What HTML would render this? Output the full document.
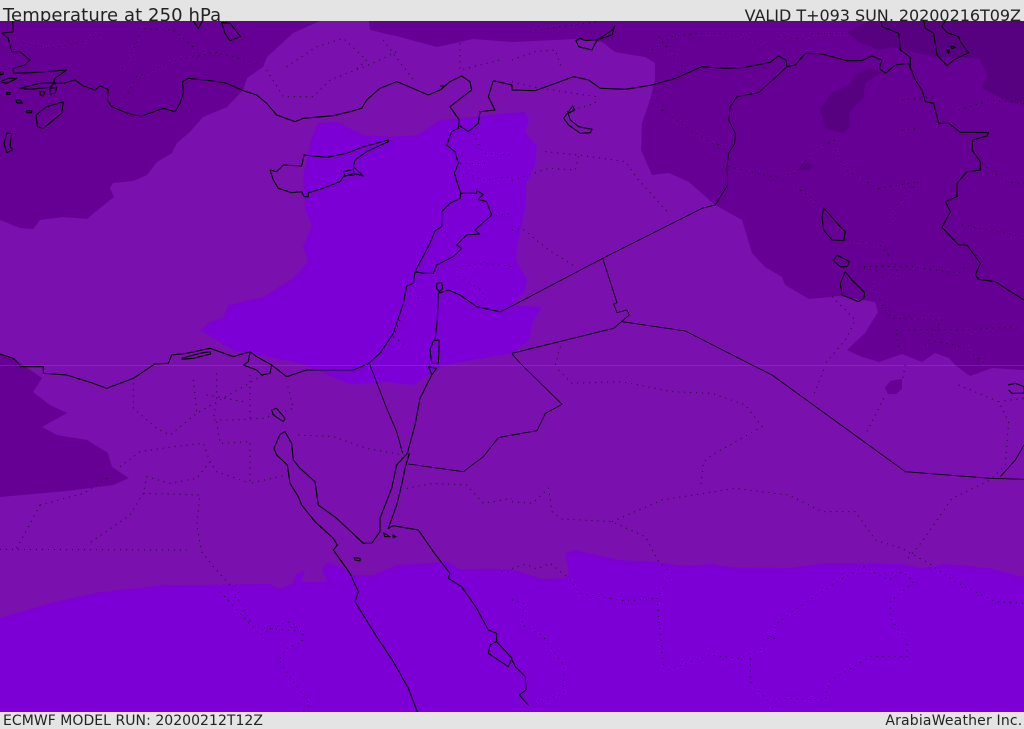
<!DOCTYPE html>
<html><head><meta charset="utf-8"><style>
html,body{margin:0;padding:0;background:#e4e4e4}
body{width:1024px;height:729px;position:relative;overflow:hidden}
.t{position:absolute;font-family:"DejaVu Sans",sans-serif;color:#222;white-space:nowrap;line-height:1}
svg{position:absolute;left:0;top:21px}
.c polyline,.c polygon{fill:none;stroke:#000;stroke-width:3.3;stroke-linejoin:round}
.d polyline{fill:none;stroke:#000;stroke-width:3;stroke-dasharray:3 15;opacity:.75}
</style></head><body>
<div class="t" style="left:3px;top:7px;font-size:18px;letter-spacing:.1px">Temperature at 250 hPa</div>
<div class="t" style="right:3px;top:8px;font-size:16px;letter-spacing:-.03px">VALID T+093 SUN, 20200216T09Z</div>
<svg width="1024" height="691" viewBox="0 21 1024 691">
<rect x="0" y="21" width="1024" height="691" fill="#7a10ad"/>
<g fill="#660094">
<polygon points="0,21 320,21 293,33 267,57 263,67 247,78 243,90 227,107 203,117 190,132 177,143 172,153 157,162 147,175 133,181 113,183 110,188 114,197 100,208 87,219 63,217 40,220 33,229 20,228 0,220"/>
<polygon points="369,21 370,30 400,37 437,47 473,39 512,42 575,39 602,42 615,52 645,57 655,63 655,80 650,100 642,123 641,150 652,175 669,173 689,182 715,205 742,220 752,253 765,267 782,277 785,285 809,299 839,296 875,302 878,312 865,333 847,350 862,357 879,362 902,354 922,362 935,353 949,358 955,365 970,376 992,368 1024,370 1024,21"/>
<polygon points="0,355 13,358 23,365 42,378 33,392 50,405 67,413 42,427 57,435 87,440 108,453 112,467 129,478 113,485 67,491 0,497"/>
<polygon points="885,388 890,381 902,379 902,389 896,394 888,394" fill="#660094"/>
</g>
<g fill="#570080">
<polygon points="847,32 865,23 872,21 1024,21 1024,105 1009,102 982,88 987,75 979,58 935,57 912,52 892,47 879,50 859,42"/>
<polygon points="882,72 865,83 864,97 849,113 850,128 842,133 825,128 820,108 832,93 849,85 855,75 870,68"/>
<polygon points="797,170 805,162 813,165 810,170"/>
</g>
<g fill="#7c00d6">
<polygon points="318,123 337,122 363,135 390,137 417,135 440,120 473,117 512,113 525,112 529,120 525,132 537,147 534,167 526,183 525,207 517,247 516,260 527,280 525,290 512,305 542,307 532,323 529,340 512,353 443,365 413,385 387,382 350,384 333,377 300,363 233,350 200,330 210,322 223,318 228,305 263,297 293,278 308,262 303,247 312,225 305,210 303,177 310,143"/>
<polygon points="0,618 50,603 100,592 167,585 270,584 280,589 293,583 295,575 303,570 305,573 300,582 327,582 322,568 328,562 340,567 353,575 373,575 397,565 447,562 460,569 512,569 542,579 565,578 569,573 565,553 575,550 619,560 659,562 682,566 712,564 729,567 789,568 825,563 902,564 922,568 945,564 989,568 1024,577 1024,712 0,712"/>
</g>
<rect x="0" y="365" width="1024" height="1" fill="#fff" opacity=".1"/>

<g class="d">
<g transform="scale(.33333)">
<polyline points="70,130 150,145 250,125 310,100"/>
<polyline points="415,85 520,90 590,150 680,165 770,190"/>
<polyline points="365,205 400,150 420,100"/>
<polyline points="375,295 410,230 530,180 660,155"/>
<polyline points="800,210 850,290 940,290 990,240 1130,185 1200,150"/>
<polyline points="860,200 950,140 1030,115 1100,180 1060,215"/>
<polyline points="1150,120 1240,240"/>
<polyline points="1380,130 1380,210 1500,180"/>
<polyline points="1420,400 1450,460 1536,465"/>
<polyline points="1380,490 1460,490"/>
<polyline points="1400,520 1450,540 1536,530"/>
<polyline points="1470,650 1536,640"/>
<polyline points="1370,800 1460,790 1536,800"/>
<polyline points="1375,830 1445,870 1460,910"/>
<polyline points="1240,880 1260,900"/>
<polyline points="1200,960 1180,1010 1220,1040"/>
</g>
<g transform="translate(512,0) scale(.33333)">
<polyline points="70,90 150,80 260,65"/>
<polyline points="420,150 480,110 560,100 640,100 780,135"/>
<polyline points="440,110 520,210"/>
<polyline points="900,100 1000,100"/>
<polyline points="800,110 900,120"/>
<polyline points="0,180 70,155 130,150 150,210"/>
<polyline points="0,245 60,260 250,290 250,310 165,335"/>
<polyline points="420,310 520,380 600,430 650,440"/>
<polyline points="100,455 200,465 340,485 380,540 470,640"/>
<polyline points="0,540 110,505 190,510 200,465"/>
<polyline points="650,500 780,530 850,520 910,445 970,420"/>
<polyline points="850,560 910,600 930,625"/>
<polyline points="970,450 1000,510 1100,565 1220,545 1150,620 1150,680"/>
<polyline points="1170,300 1270,290"/>
<polyline points="1340,330 1440,300 1536,310"/>
<polyline points="1170,390 1220,385"/>
<polyline points="1410,490 1480,545 1536,550"/>
<polyline points="1350,675 1536,710"/>
<polyline points="0,690 30,685 110,750 190,800"/>
<polyline points="960,890 1030,960 1000,1020 940,1090"/>
<polyline points="1000,720 1100,730 1150,790 1160,830 1040,800 1200,800 1340,820 1400,760"/>
<polyline points="1080,850 1120,930 1140,955 1290,960 1230,1050"/>
<polyline points="1160,1040 1150,990 1360,990 1500,980"/>
<polyline points="1250,1020 1350,1040 1420,1090"/>
<polyline points="130,1095 145,1040"/>
</g>
<g transform="translate(0,365) scale(.33333)">
<polyline points="400,55 400,130 470,190 510,210 590,145 660,105 730,65 790,30"/>
<polyline points="580,45 590,140"/>
<polyline points="650,25 650,100 640,165 700,165 790,160 880,130 860,50"/>
<polyline points="750,30 750,170"/>
<polyline points="620,90 730,110"/>
<polyline points="650,170 660,235 750,230 750,355 860,330"/>
<polyline points="360,305 420,260 520,245 610,235 630,290 650,320 750,355"/>
<polyline points="630,290 590,340 510,355 440,335 430,385 600,390 590,480 605,560 640,605 690,660 760,785 910,800 905,840"/>
<polyline points="120,420 250,385 330,335"/>
<polyline points="120,420 50,550"/>
<polyline points="0,553 560,555"/>
<polyline points="430,385 390,450 260,540"/>
<polyline points="895,210 1000,215 1100,250 1210,270"/>
<polyline points="660,680 780,810 860,770 900,785"/>
<polyline points="840,880 860,850 910,830"/>
<polyline points="840,890 880,950 930,1020 905,1040"/>
<polyline points="1220,370 1300,355 1400,360 1450,415 1536,400"/>
<polyline points="1505,620 1536,620"/>
</g>
<g transform="translate(512,365) scale(.33333)">
<polyline points="140,15 180,55 330,50 480,80 600,85 700,120 750,185 600,270 575,290 565,370"/>
<polyline points="0,410 60,415 110,370 120,440 150,462 300,470 400,515 440,590 480,625 435,700 440,760 455,905"/>
<polyline points="300,470 450,405 670,370 830,390 930,440 1030,440 1090,525 1170,550 1250,595 1330,650 1450,710 1536,715"/>
<polyline points="0,610 40,598 75,612 115,595 170,640 205,685 340,708 435,700"/>
<polyline points="935,15 905,90"/>
<polyline points="1180,0 1170,50"/>
<polyline points="1115,100 1060,210"/>
<polyline points="1340,60 1460,110 1490,170 1480,300 1435,345 1320,400 1230,530 1180,590"/>
<polyline points="1460,110 1536,100"/>
<polyline points="1055,605 960,660 840,740 790,780 790,820 755,820 755,850 680,880 590,870 470,915"/>
<polyline points="1055,605 1130,645 1170,620 1205,650 1135,710 1135,760 1185,830 1185,875 1075,875 950,950 940,1005 800,1000 780,1030"/>
<polyline points="715,880 715,950 770,1010"/>
<polyline points="0,705 35,715 30,780 90,810 155,900 155,985 60,1020"/>
</g>
</g>

<g class="c">
<g transform="scale(.33333)">
<polyline points="38,63 40,95 5,100 25,115 35,155 60,155 90,180 75,195 40,205 40,220 95,218 200,210 165,235 160,250 190,250 225,240 250,258 285,270 300,258 325,268 322,300 335,320 370,335 400,345 425,348 490,325 525,335 540,310 550,280 548,245 565,235 640,243 680,250 730,272 770,285 800,310 830,345 885,365 910,355 1000,347 1050,335 1085,325 1100,300 1140,265 1190,245 1215,255 1285,285 1320,270 1350,245 1385,228 1410,245 1415,270 1350,320 1378,360 1375,385 1355,395 1340,435 1365,455 1375,490 1363,520 1382,580 1380,595 1350,610 1325,635 1325,680 1305,692 1290,730 1245,815 1240,850 1220,858 1210,910 1180,1000 1140,1060 1100,1095"/>
<polyline points="1480,242 1536,255 1536,270 1606,272 1666,250 1721,230 1766,240 1801,265 1876,268 1956,255 2026,235 2106,200 2176,205 2236,202 2311,187 2336,168 2358,180 2361,200 2386,195 2416,160 2466,162 2541,182 2586,182 2616,168 2646,180 2638,205 2656,220 2686,195 2726,190 2746,240 2766,270 2776,305 2801,310 2816,370 2846,370 2881,397 2966,398 2961,408 2918,420 2916,450 2941,485 2941,510 2901,515 2871,550 2871,590 2836,605 2851,635 2826,682 2876,735 2901,735 2941,790 2926,825 2936,838 2986,845 3072,900"/>
<polyline points="1480,242 1465,290 1485,330 1440,335 1435,370 1405,395 1380,378"/>
<polyline points="1382,580 1430,580 1430,572 1450,583 1435,598 1460,605 1475,645 1425,690 1438,702 1400,705 1370,735 1385,745 1360,770 1310,795 1300,820 1270,820 1245,815"/>
<polyline points="1500,935 1430,920 1380,885 1345,870 1315,880 1312,960 1305,1020"/>
<polygon points="810,510 830,515 850,495 905,498 912,465 980,472 1040,460 1090,440 1165,420 1165,425 1100,455 1065,480 1060,500 1090,528 1060,520 1030,530 1020,545 960,568 925,578 925,590 912,590 905,575 875,578 835,565 820,540"/>
<polygon points="1030,515 1060,508 1062,525 1035,527"/>
<polygon points="1310,850 1325,848 1328,865 1318,875 1310,865"/>
<polygon points="1300,1022 1318,1020 1315,1090 1295,1090 1290,1050"/>
<polygon points="108,345 140,320 190,305 185,340 130,385 112,380"/>
<polygon points="20,400 35,400 30,440 38,450 20,458 12,430"/>
<polyline points="580,63 595,85 607,63"/>
<polygon points="665,68 690,70 722,110 690,122 675,100"/>
<polygon points="60,265 120,250 165,248 150,262 90,268"/>
<polygon points="120,275 135,275 130,288 120,285"/>
<polygon points="150,265 170,262 165,280 150,282"/>
<polygon points="0,245 25,235 50,235 20,250"/>
<polygon points="20,277 30,277 30,283 20,283"/>
<polygon points="48,300 60,300 68,310 50,308"/>
<polygon points="80,332 95,332 95,338 80,338"/>
<polygon points="0,215 10,215 10,222 0,225"/>
<polyline points="1320,258 1335,258 1322,270"/>
<polyline points="815,1095 770,1070 750,1055 700,1070 630,1045 560,1060 515,1065 505,1090 465,1092 460,1095"/>
<polyline points="750,1055 745,1085 730,1095"/>
<polyline points="545,1075 600,1060 630,1055 632,1062 580,1075 545,1078"/>
<polyline points="0,1062 40,1075 60,1095"/>
</g>
<g transform="translate(512,0) scale(.33333)">
<polyline points="825,200 740,278 675,290 655,320 650,360 670,400 668,430 650,460 645,500 647,555 610,615 570,625 272,775 0,918 -36,936" style="stroke-width:2.6"/>
<polyline points="272,775 315,908 305,912 315,938 345,930 352,945 305,985 0,1060" style="stroke-width:2.6"/>
<polyline points="330,965 520,993 720,1095" style="stroke-width:2.6"/>
<polygon points="935,625 945,635 980,675 1000,695 995,722 960,720 935,690 930,650"/>
<polygon points="975,765 1012,785 1005,800 985,800 965,782"/>
<polygon points="1000,815 1020,840 1058,878 1055,895 1040,905 990,885 985,850"/>
<polyline points="1108,63 1110,80 1160,100 1165,150 1195,172 1195,205"/>
<polyline points="1235,63 1240,85 1265,100 1275,165 1305,197 1325,180 1370,158 1345,125 1340,110 1305,98 1290,80 1300,63"/>
<polyline points="182,318 188,330 168,340 175,360 200,380 240,388 235,398 205,400 170,375 155,355 182,318"/>
<polygon points="192,122 205,115 220,122 260,118 300,90 308,78 300,105 255,120 240,150 200,140"/>
<polygon points="1304,150 1312,150 1310,160"/>
<polygon points="1316,138 1330,142 1320,146"/>
</g>
<g transform="translate(0,365) scale(.33333)">
<polyline points="1110,0 1160,130 1190,200 1208,265" style="stroke-width:2.6"/>
<polygon points="1285,5 1310,10 1295,30 1290,15"/>
<polyline points="1295,30 1260,100 1245,180 1222,265" />
<polyline points="1228,265 1215,310 1205,360 1190,420 1165,490 1180,482 1255,495 1300,560 1350,625 1345,640 1385,665 1430,730 1465,795 1490,805 1490,830 1470,840 1465,865 1510,895 1525,905 1536,880 1490,830"/>
<polyline points="1536,885 1546,905 1576,935 1578,975 1558,990 1586,1022"/>
<polyline points="1222,265 1190,300 1175,370 1140,460 1140,500 1115,535 1090,535 1010,460 955,420 945,350 900,310 880,285 875,235 855,200 840,208 822,250 830,270 862,300 870,355 895,395 905,420 945,470 1000,520 1012,540 1000,555 1050,625 1075,680 1065,710 1130,815 1180,890 1225,970 1252,1040"/>
<polygon points="815,135 830,130 855,160 850,170 820,150"/>
<polygon points="1062,578 1080,580 1080,588 1065,585"/>
<polygon points="1150,503 1170,515 1155,515"/>
<polygon points="1178,510 1188,515 1180,517"/>
<polyline points="1095,0 1060,15 990,15 920,15 860,35 815,0 810,25 785,30 770,15 730,0"/>
<polyline points="460,0 400,40 320,70 280,55 200,30 130,25 130,5 60,5"/>
<polyline points="1225,297 1390,320 1450,275 1495,218 1536,210 1558,208" style="stroke-width:2.6"/>
</g>
<g transform="translate(512,365) scale(.33333)">
<polyline points="0,-33 30,0 150,118 100,145 75,197 0,210" style="stroke-width:2.6"/>
<polyline points="720,0 780,30 1180,320 1435,340 1536,343" style="stroke-width:2.6"/>
<polyline points="1465,335 1510,285 1536,240" style="stroke-width:2.6"/>
<polyline points="1488,60 1510,55 1536,65 1536,85 1500,85 1490,75"/>
</g>
</g>
</svg>
<div class="t" style="left:3px;top:714px;font-size:14px;letter-spacing:.04px">ECMWF MODEL RUN: 20200212T12Z</div>
<div class="t" style="right:1.6px;top:714px;font-size:14px;letter-spacing:.18px">ArabiaWeather Inc.</div>
</body></html>
